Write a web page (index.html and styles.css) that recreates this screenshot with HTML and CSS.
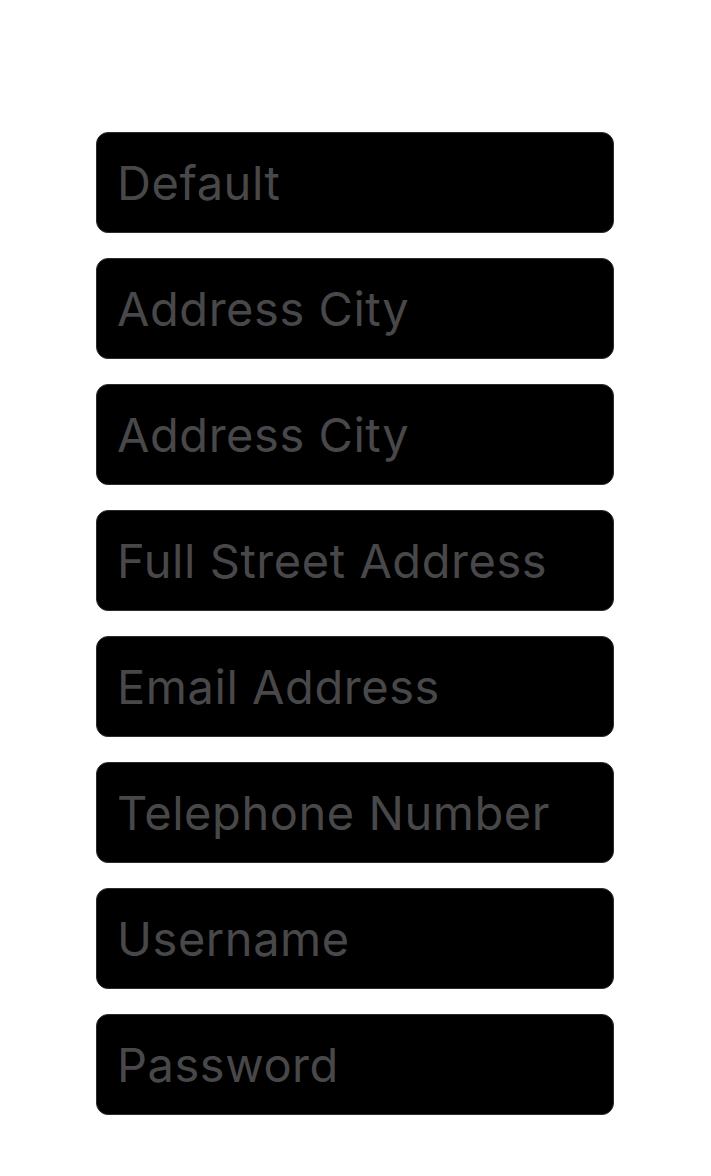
FILE: index.html
```html
<!DOCTYPE html>
<html>
<head>
<meta charset="utf-8">
<link rel="stylesheet" href="styles.css">
</head>
<body>
<form class="fields">
  <input class="field" type="text" placeholder="Default">
  <input class="field" type="text" placeholder="Address City">
  <input class="field" type="text" placeholder="Address City">
  <input class="field" type="text" placeholder="Full Street Address">
  <input class="field" type="email" placeholder="Email Address">
  <input class="field" type="tel" placeholder="Telephone Number">
  <input class="field" type="text" placeholder="Username">
  <input class="field" type="password" placeholder="Password">
</form>
</body>
</html>
```

FILE: styles.css
```css
html, body {
  margin: 0;
  padding: 0;
  background: #ffffff;
}
.fields {
  display: flex;
  flex-direction: column;
  gap: 25px;
  padding: 132px 0 0 96px;
  width: 518px;
  margin: 0;
}
.field {
  box-sizing: border-box;
  width: 518px;
  height: 101px;
  margin: 0;
  padding: 0 0 0 20px;
  background: #000000;
  border: 1.5px solid #2c2c2e;
  border-radius: 12px;
  font-family: Inter, "Liberation Sans", sans-serif;
  font-size: 47px;
  letter-spacing: 0.55px;
  color: #ffffff;
  outline: none;
}
.field::placeholder {
  color: #48484a;
  opacity: 1;
}
```
